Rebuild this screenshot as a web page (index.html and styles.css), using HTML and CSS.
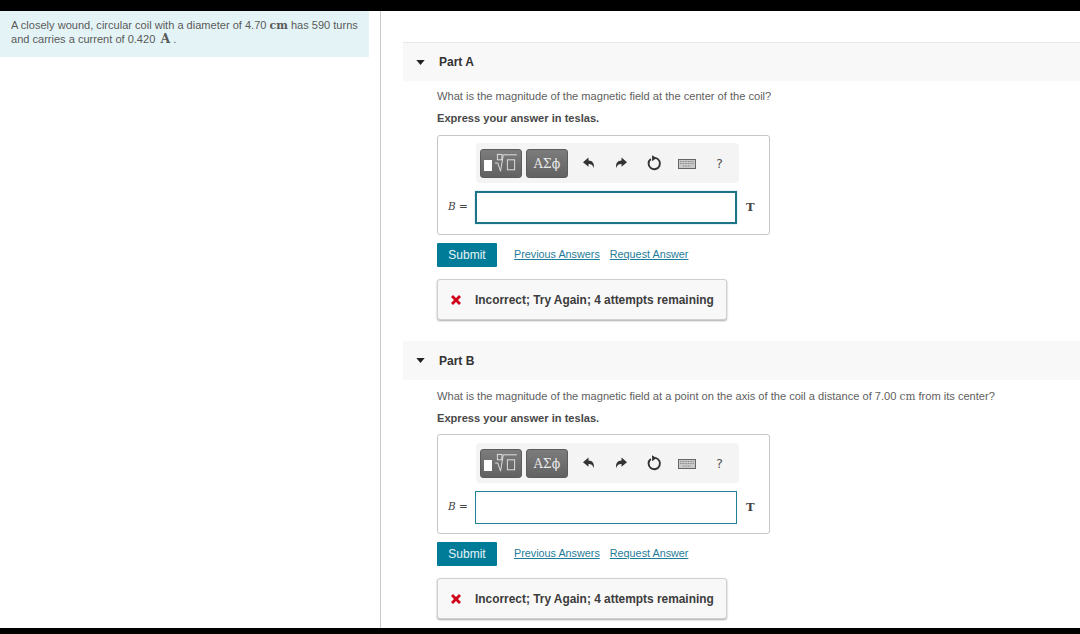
FILE: index.html
```html
<!DOCTYPE html>
<html lang="en">
<head>
<meta charset="utf-8">
<title>Coil magnetic field</title>
<link rel="stylesheet" href="styles.css">
</head>
<body>
<svg class="defs" width="0" height="0" aria-hidden="true">
  <defs>
    <symbol id="undo" viewBox="0 0 14 14"><path d="M6.500 1.500 1 6.200l5.500 4.500V8c2.600 0 4.300.8 5.200 4.200.9-4.600-1-7.400-5.200-7.600z"/></symbol>
    <symbol id="redo" viewBox="0 0 14 14"><path d="M7.500 1.500 13 6.200l-5.500 4.500V8c-2.600 0-4.300.8-5.200 4.200-.9-4.600 1-7.400 5.200-7.600z"/></symbol>
    <symbol id="reset" viewBox="0 0 16 16"><path d="M9.300 2.900a5.700 5.700 0 1 1-4.500 1.100" fill="none" stroke="currentColor" stroke-width="1.900"/><path d="M6 .3 10.600 3 6.200 6.200z"/></symbol>
    <symbol id="keys" viewBox="0 0 18 10"><rect x=".5" y=".5" width="17" height="9" fill="#c9c9c9" stroke="#666"/><path d="M2 2.500h14M2 4.500h14M5 7h8" stroke="#8a8a8a" stroke-width="1" stroke-dasharray="1 .6"/></symbol>
    <symbol id="cross" viewBox="0 0 12 12"><path d="M1 3 3 1l3 3 3-3 2 2-3 3 3 3-2 2-3-3-3 3-2-2 3-3z"/></symbol>
    <symbol id="caret" viewBox="0 0 10 6"><path d="M0 0h10L5 6z"/></symbol>
  </defs>
</svg>
<div class="bar"></div>
<main class="page">
  <aside class="left">
    <p class="intro">A closely wound, circular coil with a diameter of 4.70 <span class="unit">cm</span> has 590 turns and carries a current of 0.420 <span class="unit unit-a">A</span> .</p>
  </aside>
  <section class="right">
    <article class="part part-a">
      <header class="part-head"><svg class="caret"><use href="#caret"/></svg><span>Part A</span></header>
      <div class="part-body">
        <p class="question">What is the magnitude of the magnetic field at the center of the coil?</p>
        <p class="express">Express your answer in teslas.</p>
        <div class="answer">
          <div class="toolbar">
            <div class="tool-btn tmpl"><span class="blank"></span><svg class="radical" viewBox="0 0 26 22"><g fill="none" stroke="#e8e8e8" stroke-width="1"><rect x="3.500" y="1.500" width="5" height="6"/><path d="M1 11h3l3 9 3-18h15"/><rect x="14.500" y="7.500" width="8" height="11"/></g></svg></div>
            <div class="tool-btn sym">ΑΣϕ</div>
            <div class="icons">
              <svg class="ic"><use href="#undo"/></svg>
              <svg class="ic"><use href="#redo"/></svg>
              <svg class="ic ic-reset"><use href="#reset"/></svg>
              <svg class="ic-keys"><use href="#keys"/></svg>
              <span class="help">?</span>
            </div>
          </div>
          <div class="entry">
            <span class="var"><i>B</i> =</span>
            <div class="field focused"></div>
            <span class="t">T</span>
          </div>
        </div>
        <div class="actions">
          <button class="submit">Submit</button>
          <a class="link first" href="#">Previous Answers</a>
          <a class="link" href="#">Request Answer</a>
        </div>
        <div class="feedback"><svg class="cross"><use href="#cross"/></svg><span>Incorrect; Try Again; 4 attempts remaining</span></div>
      </div>
    </article>
    <article class="part part-b">
      <header class="part-head"><svg class="caret"><use href="#caret"/></svg><span>Part B</span></header>
      <div class="part-body">
        <p class="question">What is the magnitude of the magnetic field at a point on the axis of the coil a distance of 7.00 <span class="unit">cm</span> from its center?</p>
        <p class="express">Express your answer in teslas.</p>
        <div class="answer">
          <div class="toolbar">
            <div class="tool-btn tmpl"><span class="blank"></span><svg class="radical" viewBox="0 0 26 22"><g fill="none" stroke="#e8e8e8" stroke-width="1"><rect x="3.500" y="1.500" width="5" height="6"/><path d="M1 11h3l3 9 3-18h15"/><rect x="14.500" y="7.500" width="8" height="11"/></g></svg></div>
            <div class="tool-btn sym">ΑΣϕ</div>
            <div class="icons">
              <svg class="ic"><use href="#undo"/></svg>
              <svg class="ic"><use href="#redo"/></svg>
              <svg class="ic ic-reset"><use href="#reset"/></svg>
              <svg class="ic-keys"><use href="#keys"/></svg>
              <span class="help">?</span>
            </div>
          </div>
          <div class="entry">
            <span class="var"><i>B</i> =</span>
            <div class="field"></div>
            <span class="t">T</span>
          </div>
        </div>
        <div class="actions">
          <button class="submit">Submit</button>
          <a class="link first" href="#">Previous Answers</a>
          <a class="link" href="#">Request Answer</a>
        </div>
        <div class="feedback"><svg class="cross"><use href="#cross"/></svg><span>Incorrect; Try Again; 4 attempts remaining</span></div>
      </div>
    </article>
  </section>
</main>
<div class="bar bar-bottom"></div>
</body>
</html>
```
FILE: styles.css
```css
* { box-sizing: border-box; }
html, body { margin: 0; padding: 0; }
body {
  width: 1080px;
  height: 634px;
  overflow: hidden;
  display: flex;
  flex-direction: column;
  background: #fff;
  color: #3a3a3a;
  font-family: "Liberation Sans", Arial, sans-serif;
  font-size: 12px;
}
.defs { display: block; height: 0; }
.bar { height: 11px; flex: none; background: #000; }
.bar-bottom { height: 6px; }
.page { flex: 1; min-height: 0; display: flex; overflow: hidden; }
.left { width: 381px; flex: none; padding-right: 11px; border-right: 1px solid #c8c8c8; }
.intro {
  margin: 0;
  height: 46px;
  padding: 7px 8px 0 11px;
  background: #e4f4f6;
  color: #5a5a5a;
  font-size: 11.050px;
  line-height: 14px;
}
.unit { font-family: "DejaVu Serif", "Liberation Serif", serif; font-size: 11px; font-weight: 700; line-height: 1; }
.unit-a { font-size: 12.500px; margin-left: 2px; }
.part .unit { font-weight: 400; font-size: 10.500px; }
.right { flex: 1; min-width: 0; padding: 31px 0 0 22px; }
.part-b { margin-top: 21px; }
.part-head {
  height: 39px;
  display: flex;
  align-items: center;
  gap: 14px;
  padding-left: 13px;
  background: #f8f8f8;
  font-size: 12px;
  font-weight: 700;
  color: #333;
}
.part-a .part-head { border-top: 1px solid #e8e8e8; }
.caret { width: 9px; height: 5px; fill: #222; }
.part-body { padding: 7px 0 0 34px; }
.part-b .part-body { padding-top: 8px; }
.question { margin: 0; height: 16px; font-size: 11.100px; line-height: 16px; color: #606060; white-space: nowrap; }
.express { margin: 6px 0 0; height: 16px; font-size: 11.100px; line-height: 16px; font-weight: 700; color: #484848; }
.answer {
  width: 333px;
  height: 100px;
  margin-top: 9px;
  padding: 7px 12px 0 38px;
  border: 1px solid #c6c6c6;
  border-radius: 3px;
}
.part-b .answer { margin-top: 8px; padding-top: 8px; }
.toolbar {
  width: 263px;
  height: 40px;
  display: flex;
  align-items: center;
  gap: 4px;
  padding-left: 4px;
  background: #f4f4f4;
  border-radius: 4px;
}
.tool-btn {
  width: 42px;
  height: 29px;
  display: flex;
  align-items: center;
  justify-content: center;
  border-radius: 3px;
  border: 1px solid #5c5c5c;
  background: linear-gradient(#7c7c7c, #626262);
  color: #e8e8e8;
}
.tmpl { gap: 2px; }
.blank { width: 8px; height: 11px; margin-top: 4px; background: #fff; }
.radical { width: 24px; height: 20px; }
.sym { font-family: "DejaVu Serif", "Liberation Serif", serif; font-size: 12.500px; }
.icons { flex: 1; display: flex; align-items: center; padding-left: 10px; color: #333; fill: #333; }
.ic { width: 14px; height: 14px; margin-right: 18px; }
.ic-reset { width: 16px; height: 16px; margin-right: 16px; color: #333; }
.ic-keys { width: 18px; height: 10px; margin-top: 2px; }
.help { margin-left: 20px; font-family: "DejaVu Sans", sans-serif; font-size: 13px; color: #555; }
.entry { display: flex; align-items: center; margin-top: 8px; height: 33px; }
.var { flex: none; margin-left: -28px; width: 27px; padding-bottom: 4px; font-family: "DejaVu Serif", "Liberation Serif", serif; font-size: 10.500px; color: #444; white-space: nowrap; }
.var i { font-style: italic; }
.field { width: 262px; height: 33px; flex: none; background: #fff; border: 1px solid #1f7f95; }
.focused { border-width: 2px; border-color: #1d7488; box-shadow: 0 0 1px #5fb5c8; }
.t { margin-left: 9px; padding-bottom: 2px; font-family: "DejaVu Serif", "Liberation Serif", serif; font-weight: 700; font-size: 11.500px; color: #444; }
.actions { display: flex; align-items: center; margin-top: 8px; height: 24px; }
.submit {
  width: 60px;
  height: 24px;
  padding: 0;
  border: 0;
  border-radius: 1px;
  background: #007c99;
  color: #e8f4f7;
  font-family: "Liberation Sans", Arial, sans-serif;
  font-size: 12px;
  font-weight: 400;
}
.link { margin-left: 10px; padding-bottom: 2px; font-size: 10.800px; color: #1f7c99; text-decoration: underline; white-space: nowrap; }
.link.first { margin-left: 17px; }
.feedback {
  width: 290px;
  height: 41px;
  margin-top: 12px;
  display: flex;
  align-items: center;
  gap: 13px;
  padding-left: 12px;
  background: #f8f8f8;
  border: 1px solid #d0d0d0;
  border-radius: 3px;
  box-shadow: 0 1px 2px #aaa;
  font-size: 11.900px;
  font-weight: 700;
  color: #3c3c3c;
  white-space: nowrap;
}
.cross { width: 12px; height: 12px; fill: #d0021b; flex: none; }
```
